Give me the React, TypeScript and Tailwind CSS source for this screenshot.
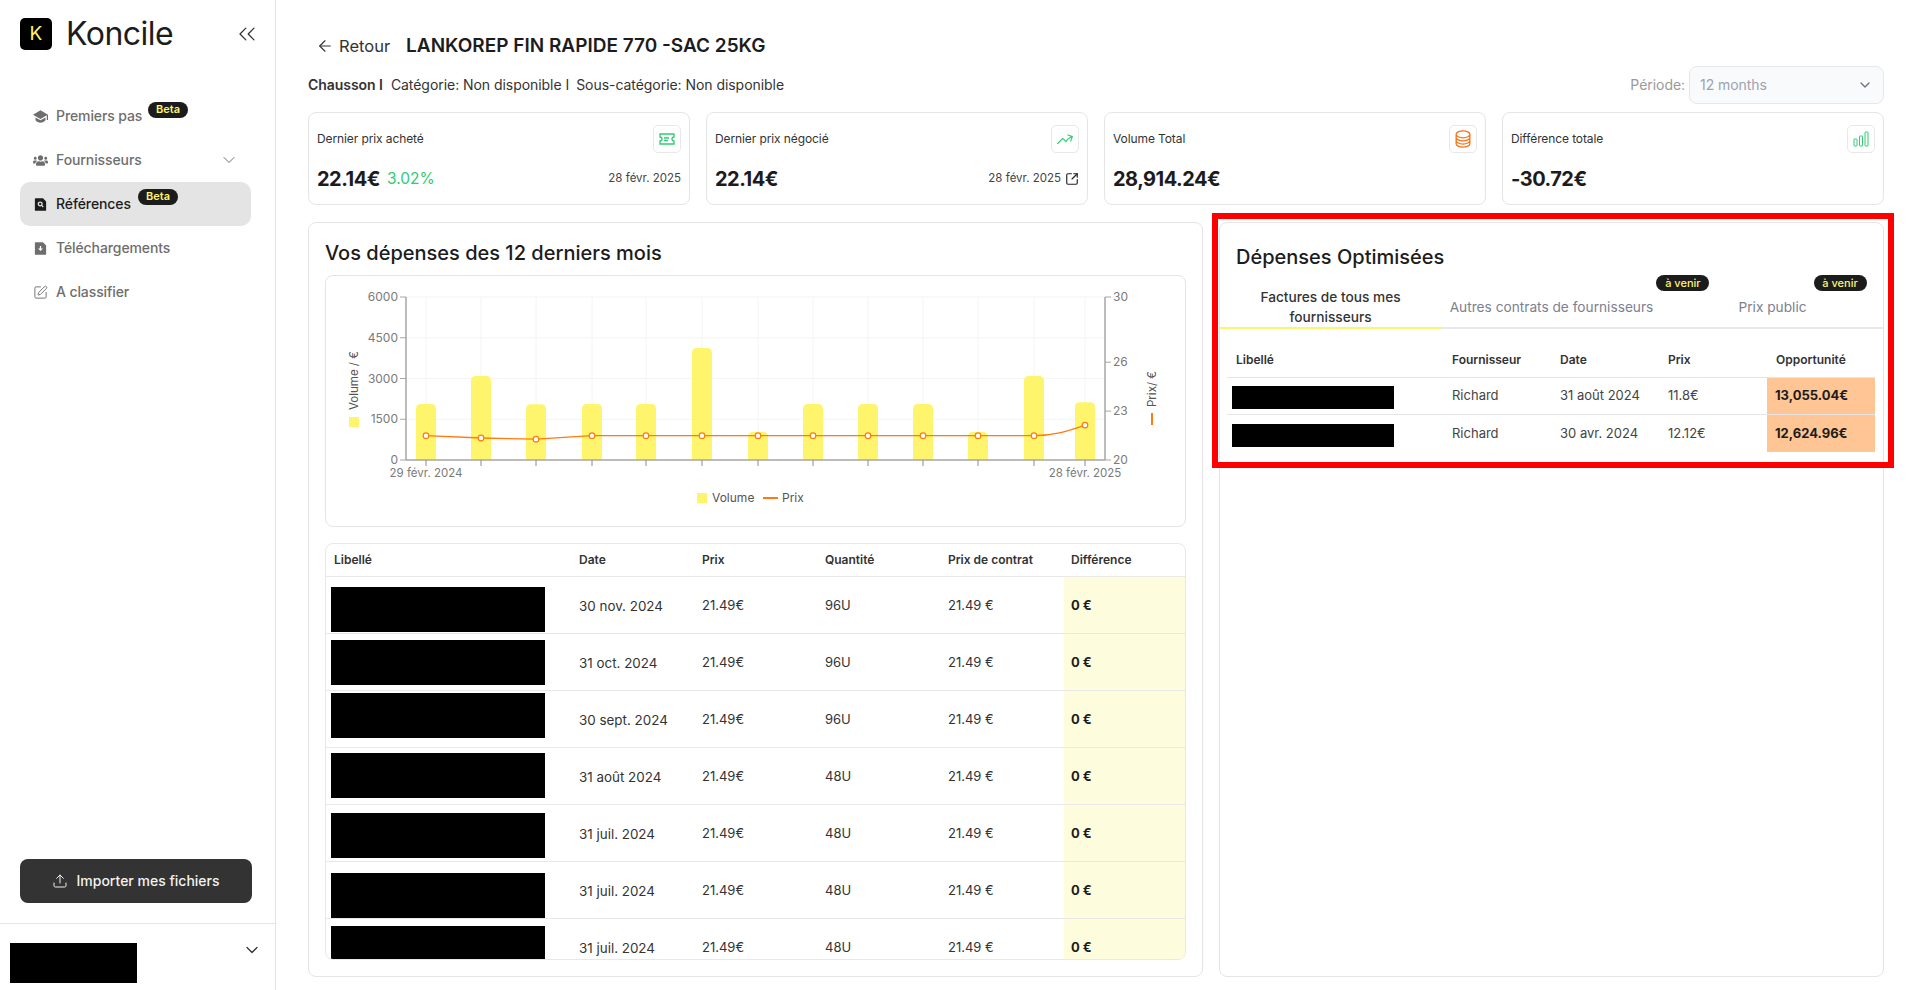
import {
  ArrowLeft,
  ChevronDown,
  ChevronsLeft,
  SquareArrowOutUpRight,
  SquarePen,
  Upload,
} from "lucide-react";
import type { ReactNode } from "react";
import { FaUsers } from "react-icons/fa";
import { HiArrowTrendingUp, HiOutlineCircleStack } from "react-icons/hi2";
import { RiFileDownloadFill, RiFileSearchFill, RiGraduationCapFill } from "react-icons/ri";

function BetaBadge({ className }: { className: string }) {
  return (
    <span className={`absolute flex h-4 w-10 items-center justify-center rounded-full bg-[#1c1c1c] text-[11px] font-semibold text-[#fff56d] ${className}`}>
      Beta
    </span>
  );
}

function Sidebar() {
  return (
    <aside className="flex h-full w-[276px] shrink-0 flex-col border-r border-[#e5e5e5]">
      <div className="mt-[18px] flex h-8 items-center pl-5 pr-[14px]">
        <div className="flex h-8 w-8 items-center justify-center rounded-[5px] bg-black text-[19px] text-[#fff56d]">K</div>
        <span className="ml-[14px] text-[32px] leading-none tracking-[-0.5px] text-[#1c1c1c]">Koncile</span>
        <ChevronsLeft className="ml-auto h-7 w-7 text-[#333]" strokeWidth={1.1} />
      </div>

      <nav className="mt-11 flex flex-col pl-5 pr-6 text-sm font-medium text-[#6e6e6e]">
        <div className="relative flex h-11 items-center pl-[13px]">
          <RiGraduationCapFill className="h-[15px] w-[15px]" />
          <span className="ml-2 tracking-[-0.1px]">Premiers pas</span>
          <BetaBadge className="left-[128px] top-[8px]" />
        </div>
        <div className="relative flex h-11 items-center pl-[13px]">
          <FaUsers className="h-[15px] w-[15px]" />
          <span className="ml-2 tracking-[-0.1px]">Fournisseurs</span>
          <ChevronDown className="absolute right-[12px] top-[12px] h-5 w-5" strokeWidth={1.2} />
        </div>
        <div className="relative flex h-11 items-center rounded-[10px] bg-[#e4e4e4] pl-[13px] text-[#1c1c1c]">
          <RiFileSearchFill className="h-[15px] w-[15px]" />
          <span className="ml-2 tracking-[-0.1px]">Références</span>
          <BetaBadge className="left-[118px] top-[7px]" />
        </div>
        <div className="flex h-11 items-center pl-[13px]">
          <RiFileDownloadFill className="h-[15px] w-[15px]" />
          <span className="ml-2 tracking-[-0.1px]">Téléchargements</span>
        </div>
        <div className="flex h-11 items-center pl-[13px]">
          <SquarePen className="h-[15px] w-[15px]" strokeWidth={1.5} />
          <span className="ml-2 tracking-[-0.1px]">A classifier</span>
        </div>
      </nav>

      <div className="mt-auto px-5 pb-5">
        <button type="button" className="flex h-11 w-[232px] items-center justify-center gap-2 rounded-lg bg-[#333333] text-sm font-medium text-[#f2f2f2]">
          <Upload className="h-4 w-4" strokeWidth={1.5} />
          Importer mes fichiers
        </button>
      </div>
      <div className="flex h-[67px] border-t border-[#e5e5e5] pl-[10px] pr-[13px] pt-[19px]">
        <div className="h-10 w-[127px] bg-black" />
        <ChevronDown className="ml-auto mt-[-3px] h-5 w-5 text-[#333]" strokeWidth={1.5} />
      </div>
    </aside>
  );
}

interface StatCardProps {
  label: string;
  value: string;
  icon: ReactNode;
  extra?: ReactNode;
  right?: ReactNode;
}

function StatCard({ label, value, icon, extra, right }: StatCardProps) {
  return (
    <div className="flex h-[93px] flex-col rounded-lg border border-[#e5e5e5] px-2 pt-3">
      <div className="flex items-center justify-between">
        <span className="text-xs tracking-[-0.1px] text-[#333]">{label}</span>
        <div className="flex h-7 w-7 items-center justify-center rounded-[5px] border border-[#e8e8e8]">{icon}</div>
      </div>
      <div className="mt-3 flex items-center">
        <span className="text-xl font-bold tracking-[-0.5px] text-[#1c1c1c]">{value}</span>
        {extra}
        <div className="ml-auto flex items-center gap-1 text-[11.5px] text-[#444]">{right}</div>
      </div>
    </div>
  );
}

const bars = [
  [426, 2063],
  [481, 3095],
  [536, 2050],
  [592, 2063],
  [646, 2063],
  [702, 4127],
  [758, 1032],
  [813, 2063],
  [868, 2063],
  [923, 2063],
  [978, 1032],
  [1034, 3095],
  [1085, 2130],
];

const prices = [21.49, 21.35, 21.28, 21.49, 21.49, 21.49, 21.49, 21.49, 21.49, 21.49, 21.49, 21.49, 22.14];

function SpendChart() {
  const top = 21;
  const bottom = 184;
  const left = 80;
  const right = 779;
  const ox = 326;
  const yLeft = (v: number) => bottom - (v / 6000) * (bottom - top);
  const yRight = (v: number) => bottom - ((v - 20) / 10) * (bottom - top);
  const leftTicks = [6000, 4500, 3000, 1500, 0];
  const rightTicks = [30, 26, 23, 20];
  const points = bars.map((b, i) => [b[0] - ox, yRight(prices[i])]);
  const linePath = points.map((p, i) => `${i === 0 ? "M" : "L"}${p[0]} ${p[1]}`).slice(0, 12).join(" ");
  const last = points[12];
  const prev = points[11];

  return (
    <svg width="858" height="250" viewBox="0 0 858 250" className="block">
      {leftTicks.map((t) => (
        <line key={t} x1={left} x2={right} y1={yLeft(t)} y2={yLeft(t)} stroke="#f4f4f4" />
      ))}
      {bars.map((b) => (
        <line key={b[0]} x1={b[0] - ox} x2={b[0] - ox} y1={top} y2={bottom} stroke="#f4f4f4" />
      ))}
      {bars.map((b) => (
        <path
          key={b[0]}
          fill="#fff56d"
          d={`M${b[0] - ox - 10} ${bottom}V${yLeft(b[1]) + 5}q0 -5 5 -5h10q5 0 5 5V${bottom}z`}
        />
      ))}
      <path d={`${linePath} C${prev[0] + 20} ${prev[1]} ${last[0] - 18} ${last[1] + 6} ${last[0]} ${last[1]}`} fill="none" stroke="#ff7a0f" strokeWidth="1.3" />
      {points.map((p) => (
        <circle key={p[0]} cx={p[0]} cy={p[1]} r="2.8" fill="#fff" stroke="#ff7a0f" strokeWidth="1.2" />
      ))}

      <line x1={left} x2={left} y1={top} y2={bottom} stroke="#a6a6a6" strokeWidth="1.5" />
      <line x1={right} x2={right} y1={top} y2={bottom} stroke="#a6a6a6" strokeWidth="1.5" />
      <line x1={left} x2={right} y1={bottom} y2={bottom} stroke="#a6a6a6" strokeWidth="1.5" />
      {leftTicks.map((t) => (
        <g key={t}>
          <line x1={left - 6} x2={left} y1={yLeft(t)} y2={yLeft(t)} stroke="#a6a6a6" />
          <text x={left - 8} y={yLeft(t) + 4} textAnchor="end" fontSize="12" fill="#7a7a7a">{t}</text>
        </g>
      ))}
      {rightTicks.map((t) => (
        <g key={t}>
          <line x1={right} x2={right + 6} y1={yRight(t)} y2={yRight(t)} stroke="#a6a6a6" />
          <text x={right + 8} y={yRight(t) + 4} fontSize="12" fill="#7a7a7a">{t}</text>
        </g>
      ))}
      {bars.map((b) => (
        <line key={b[0]} x1={b[0] - ox} x2={b[0] - ox} y1={bottom} y2={bottom + 6} stroke="#8c8c8c" />
      ))}
      <text x="100" y="201" textAnchor="middle" fontSize="11.5" fill="#7a7a7a">29 févr. 2024</text>
      <text x="759" y="201" textAnchor="middle" fontSize="11.5" fill="#7a7a7a">28 févr. 2025</text>

      <rect x="23" y="141" width="10" height="10" fill="#fff56d" />
      <text transform="translate(32 134) rotate(-90)" fontSize="11.5" fill="#555">Volume / €</text>
      <rect x="825" y="137" width="2" height="12" fill="#ff7a0f" />
      <text transform="translate(830 131) rotate(-90)" fontSize="11.5" fill="#555">Prix/ €</text>

      <rect x="371" y="217" width="10" height="10" fill="#fff56d" />
      <text x="386" y="226" fontSize="12" fill="#555">Volume</text>
      <rect x="437" y="221" width="15" height="2" fill="#ff7a0f" />
      <text x="456" y="226" fontSize="12" fill="#555">Prix</text>
    </svg>
  );
}

const purchases = [
  { date: "30 nov. 2024", qty: "96U", redact: "mt-[10px]" },
  { date: "31 oct. 2024", qty: "96U", redact: "mt-[6px]" },
  { date: "30 sept. 2024", qty: "96U", redact: "mt-[2px]" },
  { date: "31 août 2024", qty: "48U", redact: "mt-[5px]" },
  { date: "31 juil. 2024", qty: "48U", redact: "mt-[8px]" },
  { date: "31 juil. 2024", qty: "48U", redact: "mt-[11px]" },
  { date: "31 juil. 2024", qty: "48U", redact: "mt-[7px]" },
];

function PurchaseTable() {
  return (
    <div className="mt-4 min-h-0 flex-1 overflow-hidden rounded-lg border border-[#e8e8e8] text-[13px] text-[#333]">
      <div className="grid h-[33px] grid-cols-[246px_repeat(4,123px)_1fr] items-center border-b border-[#e8e8e8] text-xs font-semibold text-[#333]">
        <span className="pl-2">Libellé</span>
        <span className="pl-[7px]">Date</span>
        <span className="pl-[7px]">Prix</span>
        <span className="pl-[7px]">Quantité</span>
        <span className="pl-[7px]">Prix de contrat</span>
        <span className="pl-[7px]">Différence</span>
      </div>
      {purchases.map((row, i) => (
        <div key={i} className="grid h-[57px] grid-cols-[246px_repeat(4,123px)_1fr] items-center border-b border-[#e8e8e8]">
          <div className="self-start pl-[5px]">
            <div className={`h-[45px] w-[214px] bg-black ${row.redact}`} />
          </div>
          <span className="pl-[7px] pt-[2px] text-[13.4px]">{row.date}</span>
          <span className="pl-[7px] pt-[2px]">21.49€</span>
          <span className="pl-[7px] pt-[2px]">{row.qty}</span>
          <span className="pl-[7px] pt-[2px]">21.49 €</span>
          <div className="flex h-full items-center bg-[#fdfcdc] pl-[7px] pt-[2px] font-bold text-[#1c1c1c]">0 €</div>
        </div>
      ))}
    </div>
  );
}

function ComingSoon({ className }: { className: string }) {
  return (
    <span className={`absolute bottom-[26px] left-full flex h-4 w-[53px] items-center justify-center rounded-full bg-[#1c1c1c] text-[11px] font-medium text-[#fff56d] ${className}`}>
      à venir
    </span>
  );
}

const opportunities = [
  ["Richard", "31 août 2024", "11.8€", "13,055.04€"],
  ["Richard", "30 avr. 2024", "12.12€", "12,624.96€"],
];

function OptimizedPanel() {
  return (
    <section className="flex-1 rounded-lg border border-[#e5e5e5]">
      <h2 className="ml-4 mt-5 text-xl font-medium leading-7 text-[#1c1c1c]">Dépenses Optimisées</h2>
      <div className="mt-[13px] grid h-[45px] grid-cols-3 border-b-2 border-[#e8e8ec] text-[13.7px]">
        <div className="-mb-[2px] flex items-center justify-center border-b-2 border-[#fff56d] px-5 pt-[2px] text-center font-medium leading-5 text-[#333]">
          Factures de tous mes fournisseurs
        </div>
        <div className="flex items-center justify-center pt-[3px] text-[#7b8190]">
          <span className="relative whitespace-nowrap">
            Autres contrats de fournisseurs
            <ComingSoon className="ml-[3px]" />
          </span>
        </div>
        <div className="flex items-center justify-center pt-[3px] text-[#7b8190]">
          <span className="relative whitespace-nowrap">
            Prix public
            <ComingSoon className="ml-[7px]" />
          </span>
        </div>
      </div>
      <div className="ml-[7px] mt-[14px] text-[13px] text-[#444]">
        <div className="grid h-[35px] w-[648px] grid-cols-[216px_repeat(4,108px)] items-center border-b border-[#e5e5e5] text-xs font-semibold text-[#333]">
          <span className="pl-[9px]">Libellé</span>
          <span className="pl-[9px]">Fournisseur</span>
          <span className="pl-[9px]">Date</span>
          <span className="pl-[9px]">Prix</span>
          <span className="pl-[9px]">Opportunité</span>
        </div>
        {opportunities.map((row) => (
          <div key={row[3]} className="grid h-[37px] w-[648px] grid-cols-[216px_repeat(4,108px)] items-center border-b border-[#e5e5e5] last:border-b-0">
            <div className="pl-[5px]">
              <div className="mt-[3px] h-[23px] w-[162px] bg-black" />
            </div>
            <span className="pl-[9px]">{row[0]}</span>
            <span className="pl-[9px]">{row[1]}</span>
            <span className="pl-[9px]">{row[2]}</span>
            <div className="flex h-full items-center bg-[#ffc594] pl-2 font-bold text-[#1c1c1c]">{row[3]}</div>
          </div>
        ))}
      </div>
    </section>
  );
}

export default function App() {
  return (
    <div className="relative flex h-[990px] w-[1913px] overflow-hidden bg-white font-['Inter',sans-serif] text-[#1c1c1c]">
      <Sidebar />

      <main className="flex h-full min-w-0 flex-1 flex-col pb-[13px] pl-8 pr-[29px] pt-8">
        <div className="flex h-7 items-center pl-2">
          <ArrowLeft className="h-[18px] w-[18px] text-[#333]" strokeWidth={1.5} />
          <span className="ml-[5px] text-[16.5px] text-[#333]">Retour</span>
          <h1 className="ml-[16px] text-[19px] font-semibold text-[#1c1c1c]">LANKOREP FIN RAPIDE 770 -SAC 25KG</h1>
        </div>

        <div className="mt-[6px] flex h-[38px] items-center text-sm tracking-[-0.05px] text-[#333]">
          <span className="font-semibold">Chausson I</span>
          <span className="ml-2">Catégorie: Non disponible I</span>
          <span className="ml-[7px]">Sous-catégorie: Non disponible</span>
          <span className="ml-auto text-[#9a9a9a]">Période:</span>
          <div className="ml-1 flex h-[38px] w-[195px] items-center justify-between rounded-lg border border-[#e5e7eb] bg-[#f9fafb] pl-[10px] pr-[10px] text-[#9ca3af]">
            12 months
            <ChevronDown className="h-4 w-4 text-[#6b7280]" />
          </div>
        </div>

        <div className="mt-2 grid grid-cols-4 gap-4">
          <StatCard
            label="Dernier prix acheté"
            value="22.14€"
            icon={
              <svg width="18" height="18" viewBox="0 0 18 18" fill="none" stroke="#2ecc71" strokeWidth="1.3">
                <path d="M2 4h14v3a2 2 0 0 0 0 4v3H2v-3a2 2 0 0 0 0-4z" />
                <path d="M6 8h5M6 10.5h4" />
              </svg>
            }
            extra={<span className="ml-[7px] text-[15.5px] text-[#2ecc71]">3.02%</span>}
            right="28 févr. 2025"
          />
          <StatCard
            label="Dernier prix négocié"
            value="22.14€"
            icon={<HiArrowTrendingUp className="h-[18px] w-[18px] text-[#2ecc71]" />}
            right={
              <>
                28 févr. 2025
                <SquareArrowOutUpRight className="h-[14px] w-[14px] text-[#222]" strokeWidth={2} />
              </>
            }
          />
          <StatCard
            label="Volume Total"
            value="28,914.24€"
            icon={<HiOutlineCircleStack className="h-5 w-5 text-[#f97316]" />}
          />
          <StatCard
            label="Différence totale"
            value="-30.72€"
            icon={
              <svg width="16" height="16" viewBox="0 0 16 16" fill="none" stroke="#2ecc71" strokeWidth="1">
                <rect x="1" y="8" width="3" height="7" rx="0.5" />
                <rect x="6.5" y="5" width="3" height="10" rx="0.5" />
                <rect x="12" y="1" width="3" height="14" rx="0.5" />
              </svg>
            }
          />
        </div>

        <div className="mt-[17px] flex min-h-0 flex-1 gap-4">
          <section className="flex w-[895px] shrink-0 flex-col rounded-lg border border-[#e5e5e5] pb-4 pl-4 pr-4 pt-4">
            <h2 className="text-xl font-medium leading-7 text-[#1c1c1c]">Vos dépenses des 12 derniers mois</h2>
            <div className="mt-2 h-[252px] shrink-0 rounded-lg border border-[#e5e5e5]">
              <SpendChart />
            </div>
            <PurchaseTable />
          </section>
          <OptimizedPanel />
        </div>
      </main>

      {/* red highlight from the original capture */}
      <div className="pointer-events-none absolute left-[1212px] top-[213px] h-[255px] w-[682px] border-[6px] border-[#ff0000]" />
    </div>
  );
}
